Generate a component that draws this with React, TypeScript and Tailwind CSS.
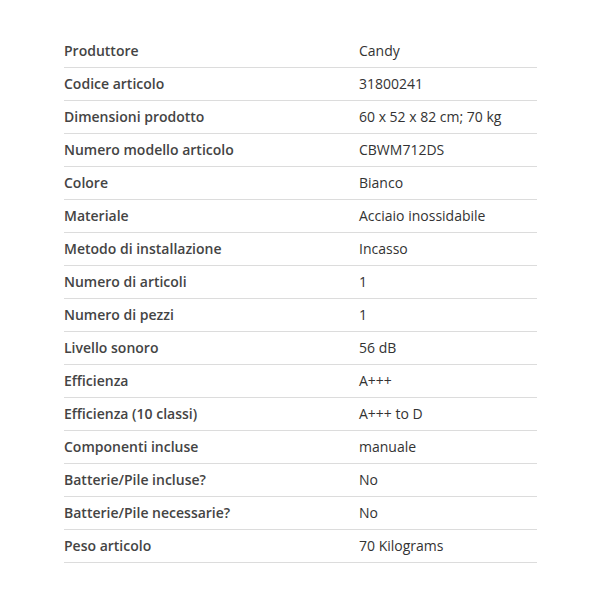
const rows: [string, string][] = [
  ["Produttore", "Candy"],
  ["Codice articolo", "31800241"],
  ["Dimensioni prodotto", "60 x 52 x 82 cm; 70 kg"],
  ["Numero modello articolo", "CBWM712DS"],
  ["Colore", "Bianco"],
  ["Materiale", "Acciaio inossidabile"],
  ["Metodo di installazione", "Incasso"],
  ["Numero di articoli", "1"],
  ["Numero di pezzi", "1"],
  ["Livello sonoro", "56 dB"],
  ["Efficienza", "A+++"],
  ["Efficienza (10 classi)", "A+++ to D"],
  ["Componenti incluse", "manuale"],
  ["Batterie/Pile incluse?", "No"],
  ["Batterie/Pile necessarie?", "No"],
  ["Peso articolo", "70 Kilograms"],
]

export default function App() {
  return (
    <div className="w-[600px] h-[600px] bg-white pt-[35px] font-['Open_Sans',sans-serif] text-[14px] text-[#333]">
      <div className="ml-[64px] w-[473px]">
        {rows.map(([label, value]) => (
          <div key={label} className="flex items-center h-[33px] pb-[2px] border-b border-[#dcdcdc]">
            <div className="w-[295px] font-semibold text-[#444]">{label}</div>
            <div className="flex-1">{value}</div>
          </div>
        ))}
      </div>
    </div>
  )
}
